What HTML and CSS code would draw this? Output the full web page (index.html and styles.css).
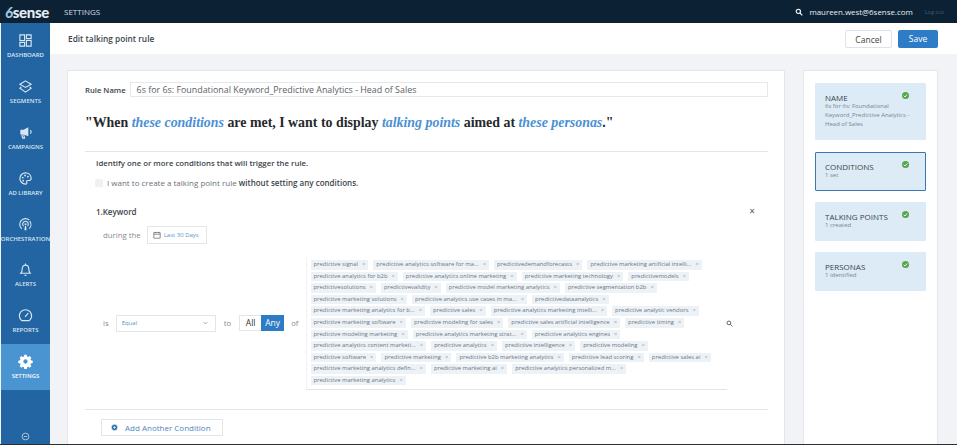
FILE: index.html
```html
<!DOCTYPE html>
<html>
<head>
    <meta charset="UTF-8">
    <meta name="viewport" content="width=device-width, initial-scale=1.0">
    <title>Edit talking point rule</title>
    <link rel="stylesheet" href="styles.css">
</head>
<body>
    <div class="app">
        <div class="topbar">
            <div class="logo"><span class="logo-six">6</span>sense</div>
            <div class="section-name">SETTINGS</div>
            <div class="user">
                <svg class="user-search" viewBox="0 0 12 12"><circle cx="5" cy="5" r="3.2"/><path d="M7.5 7.5 11 11"/></svg>
                <span class="user-mail">maureen.west@6sense.com</span>
                <span class="logout">Log out</span>
            </div>
        </div>
        <div class="body-row">
            <div class="sidebar">
                <div class="nav-item">
                    <svg viewBox="0 0 16 16"><path d="M2 2h5v6H2zM9 2h5v4H9zM2 10h5v4H2zM9 8h5v6H9z"/></svg>
                    <span>DASHBOARD</span>
                </div>
                <div class="nav-item">
                    <svg viewBox="0 0 16 16"><path d="M8 2l6 3.6L8 9 2 5.600zM3.500 8.500 2 9.800 8 14l6-4.200-1.500-1.300"/></svg>
                    <span>SEGMENTS</span>
                </div>
                <div class="nav-item">
                    <svg viewBox="0 0 16 16"><path class="fill" d="M11 2.500v9.500L6 10H2.500V5H6z"/><path d="M4 10l1 4h2l-1-4M13 5.500a2 2 0 0 1 0 3.500"/></svg>
                    <span>CAMPAIGNS</span>
                </div>
                <div class="nav-item">
                    <svg viewBox="0 0 16 16"><path d="M8 2a6 6 0 0 0 0 12c1.500 0 1.800-1 1.300-1.900-.6-1 .1-2 1.200-2H12c1.300 0 2-1 2-2.300C14 4.500 11.500 2 8 2z"/><circle class="fill" cx="5" cy="7" r="1"/><circle class="fill" cx="7.500" cy="4.800" r="1"/><circle class="fill" cx="10.500" cy="6" r="1"/><circle class="fill" cx="5.500" cy="10.300" r="1"/></svg>
                    <span>AD LIBRARY</span>
                </div>
                <div class="nav-item">
                    <svg viewBox="0 0 16 16"><path d="M4 12.500A6 6 0 0 1 12 3.200M12.500 4.500a6 6 0 0 1-.5 8M6 9.800a3 3 0 1 1 4 0"/><circle class="fill" cx="8" cy="7.700" r="1.100"/><path class="fill" d="M6.800 14l.6-4.500h1.200l.6 4.500z"/></svg>
                    <span>ORCHESTRATION</span>
                </div>
                <div class="nav-item">
                    <svg viewBox="0 0 16 16"><path d="M3 12c1-1 1.500-2 1.500-4.500C4.500 5 6 3.300 8 3.300s3.500 1.700 3.500 4.200C11.500 10 12 11 13 12zM8 1.500v1.800M7 14.200h2"/></svg>
                    <span>ALERTS</span>
                </div>
                <div class="nav-item">
                    <svg viewBox="0 0 16 16"><path d="M4 13.500a6.500 6.500 0 1 1 8 0zM7.500 9.500l3.500-4"/></svg>
                    <span>REPORTS</span>
                </div>
                <div class="nav-item active">
                    <svg viewBox="0 0 16 16"><path class="fill" fill-rule="evenodd" d="M6.700 1.500h2.600l.4 1.900 1.200.5 1.600-1 1.800 1.800-1 1.600.5 1.200 1.900.4v2.600l-1.900.4-.5 1.200 1 1.600-1.800 1.800-1.600-1-1.200.5-.4 1.900H6.700l-.4-1.900-1.200-.5-1.600 1-1.800-1.800 1-1.600-.5-1.200-1.900-.4V7.900l1.900-.4.5-1.200-1-1.600 1.800-1.800 1.600 1 1.200-.5zM8 6.500a2.300 2.300 0 1 0 0 4.600 2.300 2.300 0 0 0 0-4.600z" transform="translate(0 -.8)"/></svg>
                    <span>SETTINGS</span>
                </div>
                <div class="nav-bottom">
                    <svg viewBox="0 0 12 12"><circle cx="6" cy="6" r="4.500"/><path d="M3.800 6h4.400"/></svg>
                </div>
            </div>
            <div class="content">
                <div class="page-head">
                    <div class="page-title">Edit talking point rule</div>
                    <div class="btn-cancel">Cancel</div>
                    <div class="btn-save">Save</div>
                </div>
                <div class="panels">
                    <div class="rule-card">
                        <div class="rule-name-row">
                            <label>Rule Name</label>
                            <div class="rule-input">6s for 6s: Foundational Keyword_Predictive Analytics - Head of Sales</div>
                        </div>
                        <h1 class="sentence">"When <em>these conditions</em> are met, I want to display <em>talking points</em> aimed at <em>these personas</em>."</h1>
                        <div class="conditions">
                            <p class="hint">Identify one or more conditions that will trigger the rule.</p>
                            <div class="check-row">
                                <span class="checkbox"></span>
                                <span>I want to create a talking point rule <b>without setting any conditions.</b></span>
                            </div>
                            <div class="keyword-head">
                                <span>1.Keyword</span>
                                <span class="close">×</span>
                            </div>
                            <div class="during-row">
                                <span>during the</span>
                                <div class="date-btn">
                                    <svg viewBox="0 0 10 10"><path d="M1 2h8v7H1zM1 4h8M3 1v1.500M7 1v1.500"/></svg>
                                    Last 30 Days
                                </div>
                            </div>
                            <div class="value-row">
                                <span class="is">is</span>
                                <div class="select">Equal<svg viewBox="0 0 8 5"><path d="M1 1l3 3 3-3"/></svg></div>
                                <span class="to">to</span>
                                <div class="toggle"><span class="all">All</span><span class="any">Any</span></div>
                                <span class="of">of</span>
                                <div class="tag-box">
                                    <div class="tag-row"><span class="tag">predictive signal<i>×</i></span><span class="tag">predictive analytics software for ma...<i>×</i></span><span class="tag">predictivedemandforecasts<i>×</i></span><span class="tag">predictive marketing artificial intelli...<i>×</i></span></div>
                                    <div class="tag-row"><span class="tag">predictive analytics for b2b<i>×</i></span><span class="tag">predictive analytics online marketing<i>×</i></span><span class="tag">predictive marketing technology<i>×</i></span><span class="tag">predictivemodels<i>×</i></span></div>
                                    <div class="tag-row"><span class="tag">predictivesolutions<i>×</i></span><span class="tag">predictivevalidity<i>×</i></span><span class="tag">predictive model marketing analytics<i>×</i></span><span class="tag">predictive segmentation b2b<i>×</i></span></div>
                                    <div class="tag-row"><span class="tag">predictive marketing solutions<i>×</i></span><span class="tag">predictive analytics use cases in ma...<i>×</i></span><span class="tag">predictivedataanalytics<i>×</i></span></div>
                                    <div class="tag-row"><span class="tag">predictive marketing analytics for b...<i>×</i></span><span class="tag">predictive sales<i>×</i></span><span class="tag">predictive analytics marketing intelli...<i>×</i></span><span class="tag">predictive analytic vendors<i>×</i></span></div>
                                    <div class="tag-row"><span class="tag">predictive marketing software<i>×</i></span><span class="tag">predictive modeling for sales<i>×</i></span><span class="tag">predictive sales artificial intelligence<i>×</i></span><span class="tag">predictive timing<i>×</i></span></div>
                                    <div class="tag-row"><span class="tag">predictive modeling marketing<i>×</i></span><span class="tag">predictive analytics marketing strat...<i>×</i></span><span class="tag">predictive analytics engines<i>×</i></span></div>
                                    <div class="tag-row"><span class="tag">predictive analytics content marketi...<i>×</i></span><span class="tag">predictive analytics<i>×</i></span><span class="tag">predictive intelligence<i>×</i></span><span class="tag">predictive modeling<i>×</i></span></div>
                                    <div class="tag-row"><span class="tag">predictive software<i>×</i></span><span class="tag">predictive marketing<i>×</i></span><span class="tag">predictive b2b marketing analytics<i>×</i></span><span class="tag">predictive lead scoring<i>×</i></span><span class="tag">predictive sales ai<i>×</i></span></div>
                                    <div class="tag-row"><span class="tag">predictive marketing analytics defin...<i>×</i></span><span class="tag">predictive marketing ai<i>×</i></span><span class="tag">predictive analytics personalized m...<i>×</i></span></div>
                                    <div class="tag-row"><span class="tag">predictive marketing analytics<i>×</i></span></div>
                                </div>
                                <svg class="tag-search" viewBox="0 0 12 12"><circle cx="5" cy="5" r="3.200"/><path d="M7.500 7.500 11 11"/></svg>
                            </div>
                        </div>
                        <div class="add-row">
                            <div class="add-btn">
                                <svg viewBox="0 0 10 10"><circle cx="5" cy="5" r="4.500"/><path d="M5 3v4M3 5h4"/></svg>
                                Add Another Condition
                            </div>
                        </div>
                    </div>
                    <div class="steps-card">
                        <div class="step step-name">
                            <div class="step-title">NAME<span class="tick"><svg viewBox="0 0 8 8"><path d="M2 4.200l1.500 1.500L6 2.800"/></svg></span></div>
                            <div class="step-sub">6s for 6s: Foundational Keyword_Predictive Analytics - Head of Sales</div>
                        </div>
                        <div class="step step-current">
                            <div class="step-title">CONDITIONS<span class="tick"><svg viewBox="0 0 8 8"><path d="M2 4.200l1.500 1.500L6 2.800"/></svg></span></div>
                            <div class="step-sub">1 set</div>
                        </div>
                        <div class="step">
                            <div class="step-title">TALKING POINTS<span class="tick"><svg viewBox="0 0 8 8"><path d="M2 4.200l1.500 1.500L6 2.800"/></svg></span></div>
                            <div class="step-sub">1 created</div>
                        </div>
                        <div class="step">
                            <div class="step-title">PERSONAS<span class="tick"><svg viewBox="0 0 8 8"><path d="M2 4.200l1.500 1.500L6 2.800"/></svg></span></div>
                            <div class="step-sub">1 identified</div>
                        </div>
                    </div>
                </div>
            </div>
        </div>
    </div>
</body>
</html>
```

FILE: styles.css
```css
body {
    margin: 0;
    font-family: 'Open Sans', sans-serif;
    color: #3c444b;
    background: #f1f3f6;
}
.app {
    width: 957px;
    height: 445px;
    display: flex;
    flex-direction: column;
    overflow: hidden;
    border-bottom: 1px solid #2b2f33;
    box-sizing: border-box;
}
svg {
    fill: none;
    stroke: currentColor;
    display: block;
}
.topbar {
    height: 23px;
    flex: none;
    background: #0c2234;
    color: #fff;
    display: flex;
    align-items: center;
}
.logo {
    width: 64px;
    box-sizing: border-box;
    padding-left: 5px;
    font-family: 'Lato', sans-serif;
    font-size: 15px;
    font-weight: 900;
    letter-spacing: -0.3px;
    color: #e6edf2;
}
.logo-six {
    font-style: italic;
    color: #9fc4df;
}
.section-name {
    font-size: 8px;
    color: #d5dde3;
}
.user {
    margin-left: auto;
    display: flex;
    align-items: center;
    padding-right: 13px;
}
.user-search {
    width: 8px;
    height: 8px;
    stroke-width: 1.6;
    margin-right: 6px;
}
.user-mail {
    font-size: 7.900px;
    color: #e8edf1;
}
.logout {
    font-size: 5.500px;
    color: #43596a;
    margin-left: 12px;
}
.body-row {
    flex: 1;
    display: flex;
    min-height: 0;
}
.sidebar {
    width: 49px;
    flex: none;
    background: #2265a2;
    display: flex;
    flex-direction: column;
    margin-left: 1px;
    box-sizing: border-box;
}
.nav-item {
    height: 45.900px;
    flex: none;
    display: flex;
    flex-direction: column;
    align-items: center;
    justify-content: flex-start;
    padding-top: 10px;
    box-sizing: border-box;
    color: #d9e6f1;
}
.nav-item svg {
    width: 15px;
    height: 15px;
    stroke-width: 1.200;
}
.nav-item svg .fill {
    fill: currentColor;
    stroke: none;
}
.nav-item span {
    font-size: 6px;
    font-weight: 600;
    margin-top: 3px;
    white-space: nowrap;
}
.nav-item.active {
    background: #4a94d2;
    color: #fff;
}
.nav-bottom {
    margin-top: auto;
    padding-bottom: 3px;
    display: flex;
    justify-content: center;
    color: #d4e2ee;
}
.nav-bottom svg {
    width: 9px;
    height: 9px;
}
.content {
    flex: 1;
    min-width: 0;
    display: flex;
    flex-direction: column;
}
.page-head {
    height: 31px;
    flex: none;
    background: #fff;
    display: flex;
    align-items: center;
    padding: 0 19px 0 18px;
    box-sizing: border-box;
}
.page-title {
    font-size: 8.300px;
    font-weight: 600;
    margin-right: auto;
}
.btn-cancel, .btn-save {
    height: 18px;
    line-height: 17px;
    text-align: center;
    font-size: 8.500px;
    border-radius: 2px;
    box-sizing: border-box;
}
.btn-cancel {
    width: 47px;
    border: 1px solid #dfe3e7;
    margin-right: 6px;
    color: #444;
}
.btn-save {
    width: 40px;
    background: #2e7cc6;
    color: #fff;
}
.panels {
    flex: 1;
    display: flex;
    min-height: 0;
    padding: 16px 19px 0 17px;
    gap: 18px;
}
.rule-card {
    width: 718px;
    flex: none;
    background: #fff;
    border: 1px solid #e4e7ea;
    border-bottom: 0;
    box-sizing: border-box;
    padding: 11px 16px 0 17px;
}
.rule-name-row {
    display: flex;
    align-items: center;
    gap: 4px;
}
.rule-name-row label {
    font-size: 7.700px;
    font-weight: 600;
}
.rule-input {
    flex: 1;
    height: 15px;
    line-height: 14px;
    border: 1px solid #e6e8eb;
    box-sizing: border-box;
    padding-left: 6px;
    font-size: 8.900px;
    color: #5a6268;
}
.sentence {
    margin: 14px 0 0;
    height: 40px;
    font-family: 'Liberation Serif', serif;
    font-size: 13.900px;
    font-weight: 700;
    color: #26292c;
    border-bottom: 1px solid #e3e5e8;
    line-height: 24px;
    white-space: nowrap;
}
.sentence em {
    color: #4a90d6;
    font-style: italic;
}
.conditions {
    padding-left: 11px;
}
.hint {
    margin: 6px 0 0;
    font-size: 7.800px;
    font-weight: 600;
    line-height: 11px;
}
.check-row {
    display: flex;
    align-items: center;
    gap: 4px;
    font-size: 8px;
    line-height: 11px;
    margin-top: 8px;
    margin-left: -1px;
    color: #6a7278;
}
.check-row b {
    font-weight: 600;
    color: #3c444b;
}
.checkbox {
    width: 8px;
    height: 8px;
    background: #eff1f3;
    border-radius: 1px;
}
.keyword-head {
    display: flex;
    justify-content: space-between;
    align-items: center;
    font-size: 8px;
    font-weight: 600;
    line-height: 11px;
    margin-top: 18px;
    padding-right: 13px;
}
.close {
    font-size: 10px;
    font-weight: 400;
    color: #555;
}
.during-row {
    display: flex;
    align-items: center;
    font-size: 7.800px;
    color: #858c92;
    padding-left: 7px;
    margin-top: 9px;
    gap: 6px;
}
.date-btn {
    height: 18px;
    width: 60px;
    box-sizing: border-box;
    border: 1px solid #e3e5e8;
    display: flex;
    align-items: center;
    padding-left: 5px;
    gap: 3px;
    font-size: 6px;
    color: #5b94c9;
}
.date-btn svg {
    width: 8px;
    height: 8px;
    color: #555;
    stroke-width: .8;
}
.value-row {
    display: flex;
    align-items: center;
    margin-top: 13px;
    margin-left: 7px;
    font-size: 7.800px;
    color: #858c92;
}
.select {
    width: 100px;
    height: 17px;
    margin-left: 7px;
    box-sizing: border-box;
    border: 1px solid #e3e5e8;
    display: flex;
    align-items: center;
    justify-content: space-between;
    padding: 0 7px 0 5px;
    font-size: 6px;
    color: #5b94c9;
}
.select svg {
    width: 5px;
    height: 4px;
    color: #777;
}
.to {
    margin-left: 8px;
}
.toggle {
    display: flex;
    margin-left: 8px;
    height: 16px;
    font-size: 8.500px;
    line-height: 16px;
    text-align: center;
}
.all {
    width: 22px;
    color: #333;
    border: 1px solid #e3e5e8;
    border-right: 0;
    box-sizing: border-box;
    line-height: 14px;
}
.any {
    width: 23px;
    background: #2e7cc6;
    color: #fff;
}
.of {
    margin-left: 7px;
}
.tag-box {
    width: 421px;
    margin-left: 7px;
    box-sizing: border-box;
    padding: 2px 0 2px 4px;
    border-left: 1px solid #f1f2f4;
    border-bottom: 1px solid #e3e5e8;
}
.tag-row {
    display: flex;
    height: 11.600px;
    align-items: center;
    gap: 5px;
}
.tag {
    background: #edf2f7;
    height: 9.500px;
    line-height: 9.500px;
    padding: 0 3px;
    font-size: 5.900px;
    white-space: nowrap;
    color: #6c7782;
}
.tag i {
    font-style: normal;
    color: #9aa5ae;
    margin-left: 4px;
}
.tag-search {
    width: 7px;
    height: 7px;
    margin-left: -1px;
    color: #444;
    stroke-width: 1.400;
}
.add-row {
    margin-top: 19px;
    border-top: 1px solid #e3e5e8;
    padding: 9px 0 0 16px;
}
.add-btn {
    width: 122px;
    height: 17px;
    box-sizing: border-box;
    border: 1px solid #e3e5e8;
    display: flex;
    align-items: center;
    padding-left: 9px;
    gap: 7px;
    font-size: 8px;
    color: #4d87bf;
}
.add-btn svg {
    width: 7px;
    height: 7px;
    fill: #2a6aa6;
    color: #fff;
    stroke-width: 1;
}
.steps-card {
    flex: 1;
    background: #fff;
    border: 1px solid #e4e7ea;
    border-bottom: 0;
    padding: 12px 11px 0;
    display: flex;
    flex-direction: column;
    gap: 11px;
}
.step {
    height: 39px;
    box-sizing: border-box;
    background: #dcebf6;
    padding: 10px 10px 0;
    border-radius: 1px;
    flex: none;
}
.step-name {
    height: 57px;
    margin-bottom: 1px;
}
.step-current {
    border: 1px solid #3b78b0;
    padding: 9px 9px 0;
}
.step-title {
    display: flex;
    justify-content: space-between;
    font-size: 8px;
    line-height: 9px;
    color: #3c444b;
    padding-right: 7px;
}
.tick {
    width: 7px;
    height: 7px;
    border-radius: 50%;
    background: #56a74a;
    color: #fff;
    margin-top: -1px;
}
.tick svg {
    width: 7px;
    height: 7px;
    stroke-width: 1;
}
.step-sub {
    font-size: 6px;
    line-height: 9px;
    color: #7a858e;
}
```
